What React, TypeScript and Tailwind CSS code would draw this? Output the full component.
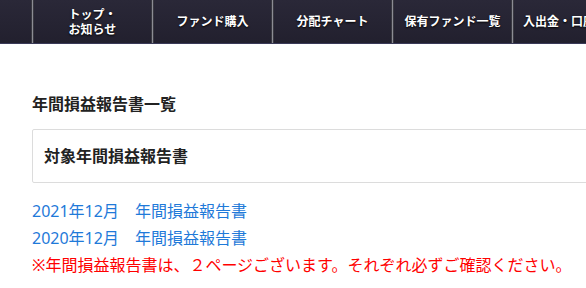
import React from "react";

const Divider = () => (
  <div className="w-[3px] shrink-0 self-stretch bg-[linear-gradient(90deg,#101018_0%,#8c8c94_50%,#101018_100%)]" />
);

const NavCell = ({ children }: { children: React.ReactNode }) => (
  <div className="w-[117px] shrink-0 flex items-center justify-center text-center text-white font-bold text-[12px] leading-[15px] [text-shadow:0_1px_2px_#000]">
    {children}
  </div>
);

export default function App() {
  return (
    <div
      className="w-[586px] h-[288px] overflow-hidden bg-white"
      style={{ fontFamily: '"Noto Sans", "Noto Sans CJK JP", sans-serif' }}
    >
      <nav className="flex h-[44px] bg-[linear-gradient(180deg,#2a2838_0%,#22202e_100%)] border-b border-[#3a3a58]">
        <div className="w-[31px] shrink-0" />
        <Divider />
        <NavCell>
          <span>
            トップ・
            <br />
            お知らせ
          </span>
        </NavCell>
        <Divider />
        <NavCell>ファンド購入</NavCell>
        <Divider />
        <NavCell>分配チャート</NavCell>
        <Divider />
        <NavCell>保有ファンド一覧</NavCell>
        <Divider />
        <div className="flex-1 min-w-0 overflow-hidden flex items-center pl-[9px] text-white font-bold text-[12px] whitespace-nowrap [text-shadow:0_1px_2px_#000]">
          入出金・口座管理
        </div>
      </nav>

      <main className="pl-[32px] pt-[48px]">
        <h2 className="text-[16px] leading-[24px] font-bold text-[#222]">年間損益報告書一覧</h2>
        <div className="mt-[13px] w-[620px] h-[54px] border border-[#dcdcdc] rounded-[2px] flex items-center pl-[11px]">
          <span className="text-[16px] font-bold text-[#222]">対象年間損益報告書</span>
        </div>
        <div className="mt-[15px] text-[16px] leading-[27px] whitespace-nowrap">
          <div>
            <a className="text-[#1f7ad9]">2021年12月　年間損益報告書</a>
          </div>
          <div>
            <a className="text-[#1f7ad9]">2020年12月　年間損益報告書</a>
          </div>
          <div className="text-[#f00]">
            ※年間損益報告書は、２ページございます。それぞれ必ずご確認ください。
          </div>
        </div>
      </main>
    </div>
  );
}
